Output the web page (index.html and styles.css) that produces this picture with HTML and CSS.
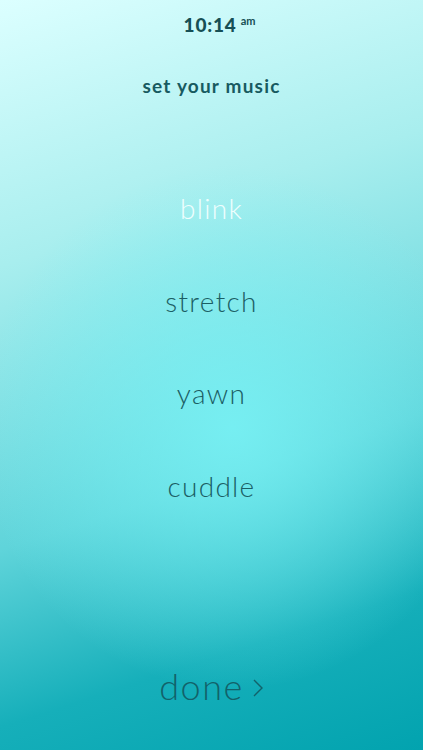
FILE: index.html
```html
<!DOCTYPE html>
<html lang="en">
<head>
  <meta charset="UTF-8">
  <meta name="viewport" content="width=device-width, initial-scale=1.0">
  <title>set your music</title>
  <link rel="stylesheet" href="styles.css">
</head>
<body>
  <div class="screen">
    <div class="status">10:14<span class="ampm">am</span></div>
    <h1 class="title">set your music</h1>

    <ul class="tracks">
      <li class="track active">blink</li>
      <li class="track">stretch</li>
      <li class="track">yawn</li>
      <li class="track">cuddle</li>
    </ul>

    <a href="#" class="done">done
      <svg class="chev" width="12" height="20" viewBox="0 0 12 20"><path d="M2 2 L10 10 L2 18" fill="none" stroke="currentColor" stroke-width="1.4"/></svg>
    </a>
  </div>
</body>
</html>
```

FILE: styles.css
```css
html, body {
  margin: 0;
  padding: 0;
  height: 100%;
  overflow: hidden;
  font-family: 'Lato', 'Noto Sans', sans-serif;
  color: #17575d;
}

.screen {
  height: 750px;
  display: flex;
  flex-direction: column;
  align-items: center;
  background:
    radial-gradient(ellipse 60% 35% at 55% 57%, rgba(120, 242, 245, 0.85) 0%, rgba(120, 242, 245, 0) 100%),
    linear-gradient(162deg, #dcffff 0%, #a8eeee 30%, #5fd4da 62%, #16afba 82%, #02a3af 100%);
}

/* Status bar */
.status {
  margin-top: 13px;
  padding-left: 16px;
  font-size: 19px;
  font-weight: 900;
  letter-spacing: 0.8px;
  color: #164f55;
}

.ampm {
  font-size: 11px;
  font-weight: 700;
  vertical-align: 7px;
  margin-left: 4px;
  letter-spacing: 0;
}

.title {
  margin: 38px 0 0;
  font-size: 19px;
  font-weight: 700;
  letter-spacing: 1.2px;
  color: #175a60;
}

/* Track list */
.tracks {
  list-style: none;
  margin: 94px 0 0;
  padding: 0;
  display: flex;
  flex-direction: column;
  align-items: center;
  gap: 57.5px;
}

.track {
  font-size: 28px;
  font-weight: 300;
  line-height: 35px;
  letter-spacing: 1.3px;
  color: #1b5e64;
}

.track.active {
  color: #effefe;
}

/* Done button */
.done {
  margin-top: auto;
  margin-bottom: 42px;
  display: flex;
  align-items: center;
  gap: 8px;
  font-size: 36px;
  font-weight: 300;
  letter-spacing: 1.5px;
  color: #12626a;
  text-decoration: none;
}

.chev {
  margin-top: 4px;
}
```
